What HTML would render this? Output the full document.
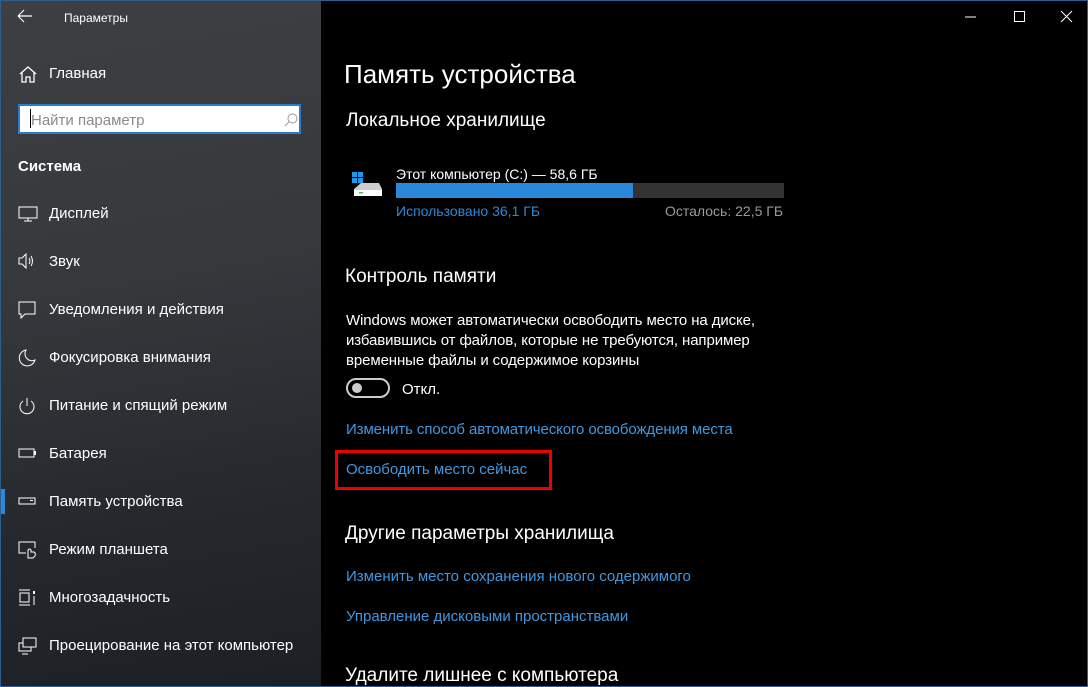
<!DOCTYPE html><html><head><meta charset="utf-8"><style>
body{margin:0;width:1088px;height:687px;overflow:hidden;font-family:"Liberation Sans",sans-serif;background:#000;position:relative}
.win{position:absolute;left:0;top:0;width:1086px;height:685px;border:1px solid #2e5d8f;overflow:hidden}
.side{position:absolute;left:0;top:0;width:320px;height:687px;background:linear-gradient(170deg,#3d3f42 0%,#36393c 40%,#262a2e 70%,#1c2025 100%);color:#fff}
.t{position:absolute;white-space:nowrap}
.it{position:absolute;left:48px;font-size:15px;color:#fff}
.ic{position:absolute;left:17px}
.main{position:absolute;left:320px;top:0;right:0;bottom:0;background:#000;color:#fff}
.lnk{color:#3f98e0;font-size:15px}
</style></head><body><div class="win">
<div class="side">
<svg class="t" style="left:16px;top:8px" width="16" height="14"><path d="M1 7H15M1 7L7 1M1 7L7 13" stroke="#fff" stroke-width="1.2" fill="none"/></svg>
<div class="t" style="left:63px;top:10px;font-size:12px">Параметры</div>
<svg class="ic" style="top:64px" width="20" height="18"><path d="M2 9L10 2L18 9M4 7V17H8V12H12V17H16V7" stroke="#fff" stroke-width="1.3" fill="none"/></svg>
<div class="it" style="top:64px;font-size:15px">Главная</div>
<div class="t" style="left:17px;top:103px;width:283px;height:30px;background:#fff;border:2px solid #2b7bd0;box-sizing:border-box"></div>
<div class="t" style="left:29px;top:108px;width:1px;height:19px;background:#000"></div>
<div class="t" style="left:30px;top:111px;font-size:15px;color:#8a8a8a">Найти параметр</div>
<svg class="t" style="left:283px;top:112px" width="14" height="14"><circle cx="8.5" cy="5.5" r="4.5" stroke="#999" fill="none"/><path d="M5.3 8.7L1 13" stroke="#999"/></svg>
<div class="t" style="left:17px;top:157px;font-size:15px;font-weight:bold">Система</div>
<svg class="ic" style="top:205px" width="20" height="16"><rect x="1" y="1" width="18" height="11" stroke="#fff" fill="none"/><path d="M10 12V15M6 15H14" stroke="#fff"/></svg>
<div class="it" style="top:204px">Дисплей</div>
<svg class="ic" style="top:252px" width="20" height="16"><path d="M1 5H4L8 1V15L4 11H1Z" stroke="#fff" fill="none"/><path d="M11 5Q13 8 11 11M13 3Q16 8 13 13" stroke="#fff" fill="none"/></svg>
<div class="it" style="top:252px">Звук</div>
<svg class="ic" style="top:300px" width="20" height="18"><path d="M1 1H17V13H7L3 17V13H1Z" stroke="#fff" fill="none"/></svg>
<div class="it" style="top:300px">Уведомления и действия</div>
<svg class="ic" style="top:348px" width="20" height="18"><path d="M8 1A8 8 0 1 0 17 11A7 7 0 0 1 8 1Z" stroke="#fff" fill="none"/></svg>
<div class="it" style="top:348px">Фокусировка внимания</div>
<svg class="ic" style="top:396px" width="20" height="18"><path d="M5 4A7 7 0 1 0 13 4M9 1V9" stroke="#fff" fill="none"/></svg>
<div class="it" style="top:396px">Питание и спящий режим</div>
<svg class="ic" style="top:447px" width="20" height="12"><rect x="1" y="1" width="15" height="8" stroke="#fff" fill="none"/><rect x="16" y="3" width="2" height="4" fill="#fff"/></svg>
<div class="it" style="top:444px">Батарея</div>
<div class="t" style="left:0;top:488px;width:4px;height:25px;background:#2b88d8"></div>
<svg class="ic" style="top:496px" width="20" height="10"><rect x="1" y="1" width="16" height="6" stroke="#fff" fill="none"/><rect x="12" y="3" width="3" height="1" fill="#fff"/></svg>
<div class="it" style="top:492px">Память устройства</div>
<svg class="ic" style="top:540px" width="20" height="18"><path d="M8 12H1V1H17V7" stroke="#fff" fill="none"/><path d="M10 17V9Q12 7 13 9V11H16Q18 12 17 15L15 17Z" stroke="#fff" fill="none"/></svg>
<div class="it" style="top:540px">Режим планшета</div>
<svg class="ic" style="top:588px" width="20" height="18"><path d="M1 1H12M1 16H12M2 4H11V13H2Z" stroke="#fff" fill="none"/><rect x="15" y="2" width="2" height="3" fill="#fff"/><path d="M16 7V16" stroke="#fff"/></svg>
<div class="it" style="top:588px">Многозадачность</div>
<svg class="ic" style="top:636px" width="20" height="18"><rect x="5" y="1" width="13" height="9" stroke="#fff" fill="none"/><path d="M5 6H1V14H13V10M4 17H10" stroke="#fff" fill="none"/></svg>
<div class="it" style="top:636px">Проецирование на этот компьютер</div>
</div>
<div class="main">
<svg class="t" style="left:640px;top:8px" width="120" height="16"><path d="M4 8H15" stroke="#fff"/><rect x="53.5" y="2.5" width="10" height="10" stroke="#fff" fill="none"/><path d="M100 2L111 13M111 2L100 13" stroke="#fff"/></svg>
<div class="t" style="left:23px;top:58px;font-size:26px">Память устройства</div>
<div class="t" style="left:25px;top:109px;font-size:19px">Локальное хранилище</div>
<svg class="t" style="left:30px;top:170px" width="34" height="28"><rect x="1" y="1" width="5" height="5" fill="#1e9be8"/><rect x="7" y="1" width="5" height="5" fill="#1e9be8"/><rect x="1" y="7" width="5" height="5" fill="#1e9be8"/><rect x="7" y="7" width="5" height="5" fill="#1e9be8"/><path d="M3 18L10 12H28L31 18V25H3Z" fill="#ccc"/><rect x="3" y="19" width="28" height="6" fill="#fff"/><rect x="8" y="21" width="4" height="1.5" fill="#5b5"/></svg>
<div class="t" style="left:75px;top:165px;font-size:14px">Этот компьютер (C:) — 58,6 ГБ</div>
<div class="t" style="left:75px;top:182px;width:388px;height:15px;background:#333"></div>
<div class="t" style="left:75px;top:182px;width:237px;height:15px;background:#2b88d8"></div>
<div class="t lnk" style="left:75px;top:202px;font-size:14px;color:#2b88d8">Использовано 36,1 ГБ</div>
<div class="t" style="left:344px;top:202px;font-size:14px;color:#9a9a9a">Осталось: 22,5 ГБ</div>
<div class="t" style="left:24px;top:265px;font-size:19px">Контроль памяти</div>
<div class="t" style="left:25px;top:310px;font-size:15px;line-height:20px;letter-spacing:-0.1px">Windows может автоматически освободить место на диске,<br>избавившись от файлов, которые не требуются, например<br>временные файлы и содержимое корзины</div>
<div class="t" style="left:25px;top:377px;width:44px;height:20px;border:2px solid #ccc;border-radius:12px;box-sizing:border-box"></div>
<div class="t" style="left:31px;top:382px;width:10px;height:10px;border-radius:5px;background:#ccc"></div>
<div class="t" style="left:81px;top:380px;font-size:15px">Откл.</div>
<div class="t lnk" style="left:25px;top:420px;letter-spacing:-0.1px">Изменить способ автоматического освобождения места</div>
<div class="t" style="left:14px;top:449px;width:217px;height:40px;border:3px solid #e00;box-sizing:border-box"></div>
<div class="t lnk" style="left:25px;top:460px">Освободить место сейчас</div>
<div class="t" style="left:24px;top:522px;font-size:19px">Другие параметры хранилища</div>
<div class="t lnk" style="left:25px;top:567px">Изменить место сохранения нового содержимого</div>
<div class="t lnk" style="left:25px;top:607px">Управление дисковыми пространствами</div>
<div class="t" style="left:24px;top:664px;font-size:19px">Удалите лишнее с компьютера</div>
</div>
</div></body></html>
